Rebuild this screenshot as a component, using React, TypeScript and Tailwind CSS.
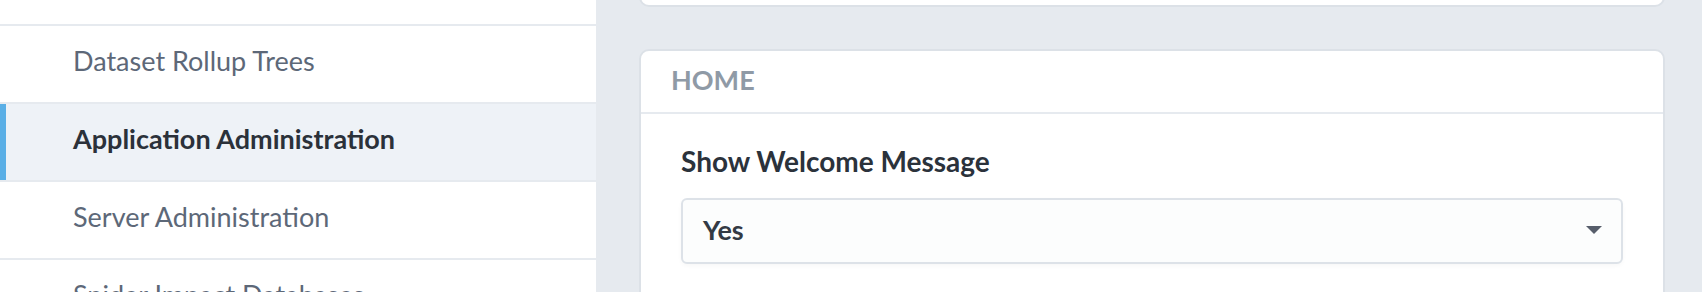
const font = { fontFamily: '"Source Sans Pro", Lato, "Noto Sans", sans-serif' }

function NavItem({ label, active = false, className = "" }: { label: string; active?: boolean; className?: string }) {
  return (
    <div
      className={`relative flex h-[78px] shrink-0 items-center border-b-2 border-[#e6eaef] pl-[73px] pb-[6px] text-[27px] ${
        active ? "bg-[#eef2f7] font-bold text-[#2b313a]" : "text-[#5d6878]"
      } ${className}`}
    >
      {active && <div className="absolute left-0 top-0 h-[76px] w-[6px] bg-[#5aafe6]" />}
      {label}
    </div>
  )
}

export default function App() {
  return (
    <div className="flex h-[292px] w-[1702px] overflow-hidden bg-[#e6eaef]" style={font}>
      {/* Sidebar */}
      <div className="flex w-[596px] shrink-0 flex-col bg-white">
        <NavItem label="Security" className="mt-[-52px]" />
        <NavItem label="Dataset Rollup Trees" />
        <NavItem label="Application Administration" active />
        <NavItem label="Server Administration" />
        <NavItem label="Spider Impact Databases" />
      </div>

      {/* Main */}
      <div className="flex min-w-0 flex-1 flex-col pl-[43px] pr-[37px]">
        <div className="mt-[-30px] h-[37px] shrink-0 rounded-b-[10px] border-2 border-[#dce1e7] bg-white" />

        <div className="mt-[42px] shrink-0 rounded-[10px] border-2 border-[#dce1e7] bg-white">
          <div className="flex h-[63px] items-center border-b-2 border-[#e6eaef] pl-[30px] pb-[2px] text-[27px] font-bold uppercase text-[#8f9aa6]">
            Home
          </div>
          <div className="px-[40px] pt-[27px] pb-[40px]">
            <div className="text-[28px] font-bold leading-[40px] text-[#2b323b]">Show Welcome Message</div>
            <div className="mt-[17px] flex h-[66px] items-center justify-between rounded-[6px] border-2 border-[#dde2e8] bg-[#fcfdfd] pl-[20px] pr-[19px] shadow-[0_2px_4px_rgba(0,0,0,0.03)]">
              <span className="pb-[2px] text-[27px] font-bold text-[#333a44]">Yes</span>
              <svg width="16" height="8" viewBox="0 0 16 8" className="mt-[-2px]">
                <polygon points="0,0 16,0 8,8" fill="#575e6b" />
              </svg>
            </div>
          </div>
        </div>
      </div>
    </div>
  )
}
